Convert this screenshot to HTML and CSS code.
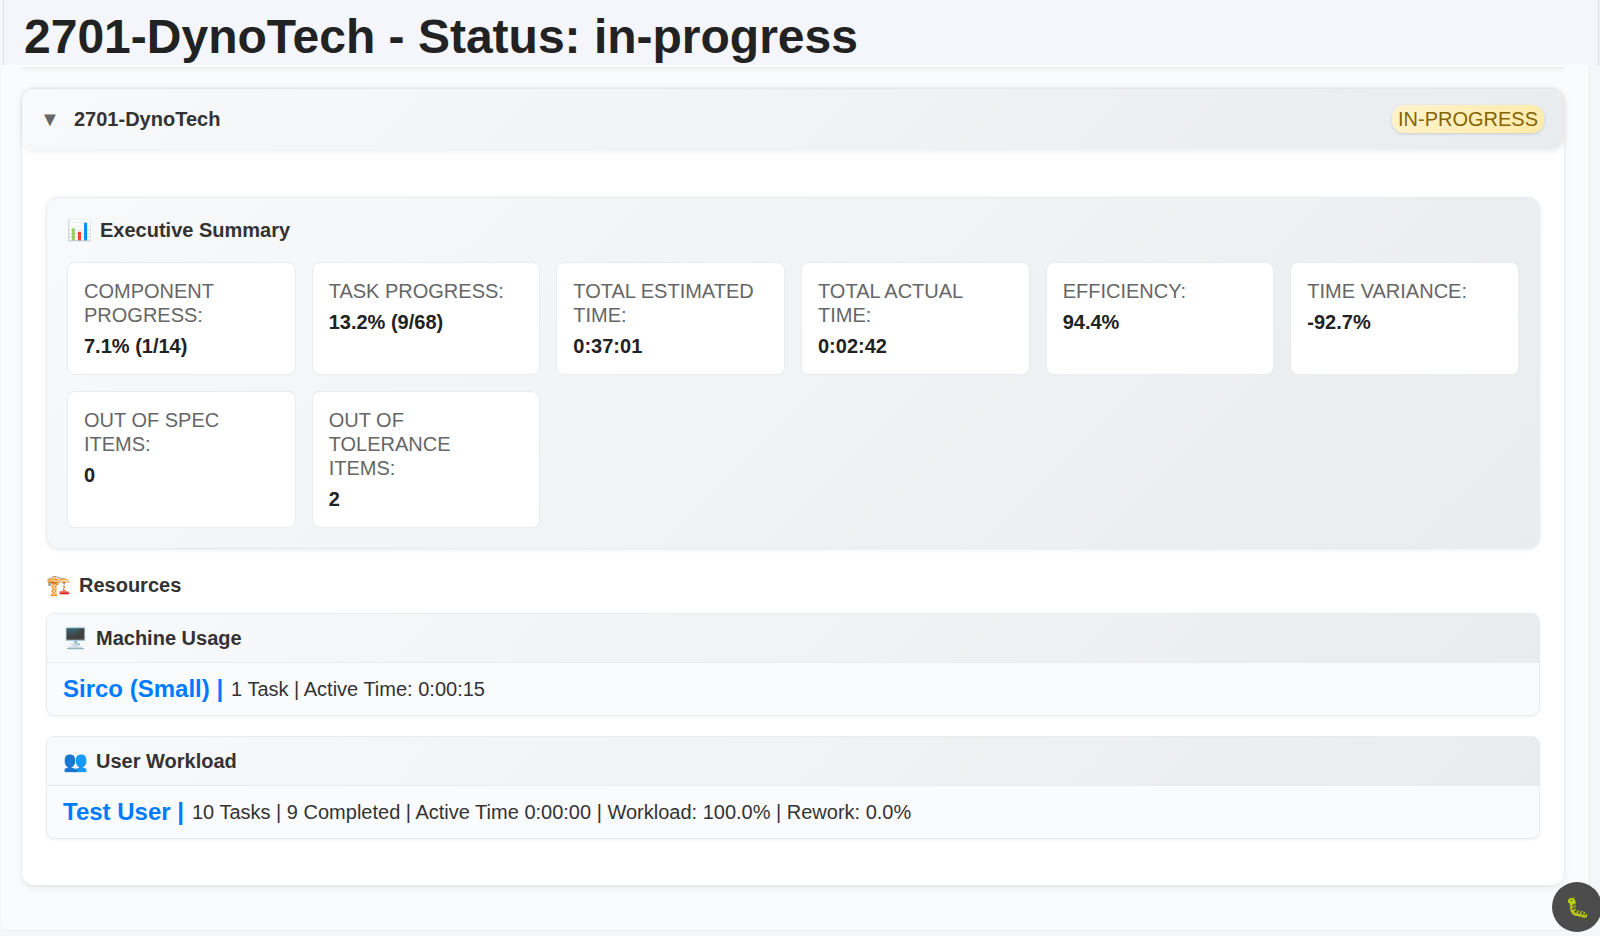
FILE: index.html
```html
<!DOCTYPE html>
<html lang="en">
<head>
    <meta charset="UTF-8">
    <meta name="viewport" content="width=device-width, initial-scale=1.0">
    <title>2701-DynoTech - Status: in-progress</title>
    <link rel="stylesheet" href="styles.css">
</head>
<body>
    <header class="page-header">
        <h1>2701-DynoTech - Status: in-progress</h1>
    </header>

    <main class="report">
        <!-- end of the section above -->
        <div class="card-end"></div>

        <section class="project-card">
            <button class="project-header" type="button" aria-expanded="true" aria-controls="project-body">
                <span class="toggle">▼</span>
                <span class="project-name">2701-DynoTech</span>
                <span class="status-badge">IN-PROGRESS</span>
            </button>

            <div class="project-body" id="project-body">
                <section class="summary">
                    <h2 class="section-title"><span class="icon">📊</span>Executive Summary</h2>
                    <dl class="summary-grid">
                        <div class="summary-item"><dt>COMPONENT PROGRESS:</dt><dd>7.1% (1/14)</dd></div>
                        <div class="summary-item"><dt>TASK PROGRESS:</dt><dd>13.2% (9/68)</dd></div>
                        <div class="summary-item"><dt>TOTAL ESTIMATED TIME:</dt><dd>0:37:01</dd></div>
                        <div class="summary-item"><dt>TOTAL ACTUAL TIME:</dt><dd>0:02:42</dd></div>
                        <div class="summary-item"><dt>EFFICIENCY:</dt><dd>94.4%</dd></div>
                        <div class="summary-item"><dt>TIME VARIANCE:</dt><dd>-92.7%</dd></div>
                        <div class="summary-item"><dt>OUT OF SPEC ITEMS:</dt><dd>0</dd></div>
                        <div class="summary-item"><dt>OUT OF TOLERANCE<br>ITEMS:</dt><dd>2</dd></div>
                    </dl>
                </section>

                <section class="resources">
                    <h2 class="section-title"><span class="icon">🏗️</span>Resources</h2>

                    <div class="resource-card">
                        <h3 class="resource-header"><span class="icon">🖥️</span>Machine Usage</h3>
                        <div class="resource-row">
                            <span class="resource-name">Sirco (Small) |</span>
                            <span>1 Task | Active Time: 0:00:15</span>
                        </div>
                    </div>

                    <div class="resource-card">
                        <h3 class="resource-header"><span class="icon">👥</span>User Workload</h3>
                        <div class="resource-row">
                            <span class="resource-name">Test User |</span>
                            <span>10 Tasks | 9 Completed | Active Time 0:00:00 | Workload: 100.0% | Rework: 0.0%</span>
                        </div>
                    </div>
                </section>
            </div>
        </section>
    </main>

    <button class="bug-btn" type="button" aria-label="Report a bug">🐛</button>

    <script>
        // collapse / expand the project
        const header = document.querySelector('.project-header');
        const body = document.getElementById('project-body');
        header.addEventListener('click', () => {
            body.hidden = !body.hidden;
            header.setAttribute('aria-expanded', String(!body.hidden));
            header.querySelector('.toggle').textContent = body.hidden ? '▶' : '▼';
        });
    </script>
</body>
</html>
```
FILE: styles.css
```css
:root {
    --page: #f5f6fa;
    --panel: #fafbfd;
    --border: #e9ecef;
    --text: #333;
    --text-dark: #222;
    --muted: #666;
    --link: #007bff;
    --grey-fade: linear-gradient(135deg, #f8f9fa 0%, #e9ecef 100%);
}

* {
    margin: 0;
    padding: 0;
    box-sizing: border-box;
}

body {
    background: var(--page);
    color: var(--text);
    font-family: "Liberation Sans", Arial, sans-serif;
    font-size: 20px;
    line-height: 24px;
}

button {
    font: inherit;
    color: inherit;
    border: none;
    cursor: pointer;
}

.page-header {
    position: sticky;
    top: 0;
    z-index: 10;
    margin: 0 1px 0 3px;
    padding: 9px 20px 0;
    background: #f5f6fb;
    border-left: 1px solid #dcdee2;
    border-right: 1px solid #dcdee2;
}

.page-header h1 {
    font-size: 48px;
    line-height: 56px;
    color: var(--text-dark);
}

.report {
    margin: 0 10px 0 1px;
    padding: 0 25px 44px 21px;
    background: var(--panel);
    border: 1px solid var(--border);
    border-top: none;
    border-left: none;
    border-radius: 0 0 8px 8px;
}

.card-end {
    height: 3px;
    margin-bottom: 20px;
    background: white;
    border-bottom: 1px solid var(--border);
    border-radius: 0 0 12px 12px;
    box-shadow: 0 2px 4px rgba(0,0,0,0.05);
}

.project-card {
    background: white;
    border: 1px solid var(--border);
    border-left: none;
    border-right: none;
    border-radius: 12px;
    box-shadow: 0 0 0 1px rgba(0,0,0,0.03), 0 2px 8px rgba(0,0,0,0.06);
}

.project-header {
    display: flex;
    align-items: center;
    width: 100%;
    padding: 16px 20px 16px 18px;
    background: var(--grey-fade);
    border-radius: 12px;
    box-shadow: 0 2px 6px rgba(0,0,0,0.08);
    text-align: left;
}

.toggle {
    width: 34px;
    color: var(--muted);
    font-size: 20px;
}

.project-name {
    flex: 1;
    font-weight: bold;
}

.status-badge {
    padding: 2px 6px;
    background: linear-gradient(135deg, #fff3cd 0%, #ffeaa7 100%);
    color: #856404;
    border-radius: 12px;
    box-shadow: 0 1px 3px rgba(0,0,0,0.15);
}

.project-body {
    padding: 48px 24px 46px;
}

.summary {
    padding: 20px;
    margin-bottom: 24px;
    background: var(--grey-fade);
    border: 1px solid var(--border);
    border-radius: 12px;
    box-shadow: 0 1px 4px rgba(0,0,0,0.08);
}

.section-title {
    display: flex;
    align-items: center;
    gap: 8px;
    font-size: 20px;
    line-height: 24px;
}

.summary-grid {
    display: grid;
    grid-template-columns: repeat(auto-fit, minmax(200px, 1fr));
    gap: 16px;
    margin-top: 20px;
}

.summary-item {
    padding: 16px;
    background: white;
    border: 1px solid var(--border);
    border-radius: 8px;
}

.summary-item dt {
    margin-bottom: 8px;
    color: var(--muted);
}

.summary-item dd {
    color: var(--text-dark);
    font-weight: bold;
    line-height: 23px;
}

.resources .section-title {
    margin-bottom: 16px;
}

.resource-card {
    background: var(--panel);
    border: 1px solid var(--border);
    border-radius: 8px;
    box-shadow: 0 1px 3px rgba(0,0,0,0.05);
    overflow: hidden;
}

.resource-card + .resource-card {
    margin-top: 20px;
}

.resource-header {
    display: flex;
    align-items: center;
    gap: 8px;
    padding: 12px 16px;
    background: var(--grey-fade);
    border-bottom: 1px solid var(--border);
    font-size: 20px;
    line-height: 24px;
}

.resource-row {
    display: flex;
    align-items: center;
    gap: 8px;
    padding: 12px 16px;
    line-height: 28px;
}

.resource-name {
    color: var(--link);
    font-size: 24px;
    font-weight: bold;
}

/* floating bug report button */
.bug-btn {
    position: fixed;
    right: -2px;
    bottom: 4px;
    z-index: 20;
    width: 50px;
    height: 50px;
    border-radius: 50%;
    background: rgba(51,51,51,0.88);
}
```
